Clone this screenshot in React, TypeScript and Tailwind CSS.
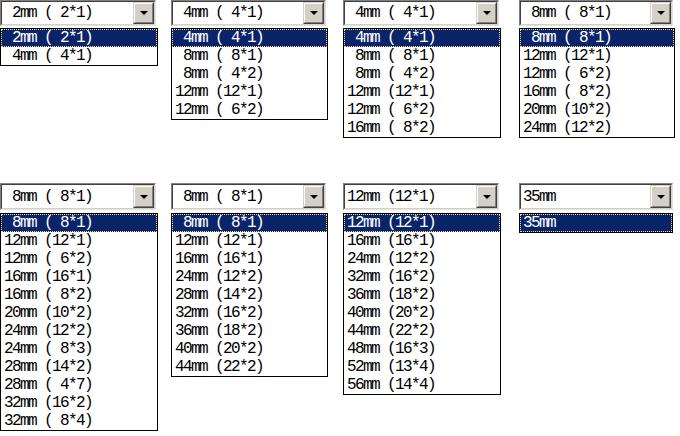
import React from 'react';

type Combo = {
  col: string;
  w: string;
  lw: string;
  value: string;
  items: string[];
};

const topRow: Combo[] = [
  {
    col: 'w-[171px]',
    w: 'w-[156px]',
    lw: 'w-[158px]',
    value: ' 2mm ( 2*1)',
    items: [' 2mm ( 2*1)', ' 4mm ( 4*1)'],
  },
  {
    col: 'w-[172px]',
    w: 'w-[155px]',
    lw: 'w-[157px]',
    value: ' 4mm ( 4*1)',
    items: [' 4mm ( 4*1)', ' 8mm ( 8*1)', ' 8mm ( 4*2)', '12mm (12*1)', '12mm ( 6*2)'],
  },
  {
    col: 'w-[176px]',
    w: 'w-[156px]',
    lw: 'w-[158px]',
    value: ' 4mm ( 4*1)',
    items: [' 4mm ( 4*1)', ' 8mm ( 8*1)', ' 8mm ( 4*2)', '12mm (12*1)', '12mm ( 6*2)', '16mm ( 8*2)'],
  },
  {
    col: 'w-[161px]',
    w: 'w-[154px]',
    lw: 'w-[156px]',
    value: ' 8mm ( 8*1)',
    items: [' 8mm ( 8*1)', '12mm (12*1)', '12mm ( 6*2)', '16mm ( 8*2)', '20mm (10*2)', '24mm (12*2)'],
  },
];

const bottomRow: Combo[] = [
  {
    col: 'w-[171px]',
    w: 'w-[156px]',
    lw: 'w-[158px]',
    value: ' 8mm ( 8*1)',
    items: [
      ' 8mm ( 8*1)', '12mm (12*1)', '12mm ( 6*2)', '16mm (16*1)', '16mm ( 8*2)', '20mm (10*2)',
      '24mm (12*2)', '24mm ( 8*3)', '28mm (14*2)', '28mm ( 4*7)', '32mm (16*2)', '32mm ( 8*4)',
    ],
  },
  {
    col: 'w-[172px]',
    w: 'w-[155px]',
    lw: 'w-[157px]',
    value: ' 8mm ( 8*1)',
    items: [
      ' 8mm ( 8*1)', '12mm (12*1)', '16mm (16*1)', '24mm (12*2)', '28mm (14*2)', '32mm (16*2)',
      '36mm (18*2)', '40mm (20*2)', '44mm (22*2)',
    ],
  },
  {
    col: 'w-[176px]',
    w: 'w-[156px]',
    lw: 'w-[158px]',
    value: '12mm (12*1)',
    items: [
      '12mm (12*1)', '16mm (16*1)', '24mm (12*2)', '32mm (16*2)', '36mm (18*2)', '40mm (20*2)',
      '44mm (22*2)', '48mm (16*3)', '52mm (13*4)', '56mm (14*4)',
    ],
  },
  {
    col: 'w-[161px]',
    w: 'w-[154px]',
    lw: 'w-[154px]',
    value: '35mm',
    items: ['35mm'],
  },
];

const font = "font-['Liberation_Mono',monospace] text-[16px] tracking-[-1.6px] whitespace-pre";

const ComboBox = ({ c, tall }: { c: Combo; tall?: boolean }) => (
  <div className={c.col}>
    {/* closed box, sunken border */}
    <div
      className={`${c.w} ${tall ? 'h-[27px]' : 'h-[26px]'} border border-t-[#808080] border-l-[#808080] border-r-[#e4e2dc] border-b-[#e4e2dc]`}
    >
      <div className="h-full flex items-center bg-white border border-t-[#404040] border-l-[#404040] border-r-[#d4d0c8] border-b-[#d4d0c8]">
        <span className={`${font} pl-[2px] leading-[18px] text-black`}>{c.value}</span>
        <div className="ml-auto h-full w-[21px] bg-[#d4d0c8] border border-t-[#d4d0c8] border-l-[#d4d0c8] border-r-[#404040] border-b-[#404040]">
          <div className="h-full flex items-center justify-center border border-t-white border-l-white border-r-[#808080] border-b-[#808080]">
            <svg width="8" height="4" viewBox="0 0 8 4">
              <path d="M0 0h8L4 4z" fill="#000" />
            </svg>
          </div>
        </div>
      </div>
    </div>

    {/* open list */}
    <div className={`${c.lw} ${tall ? 'mt-[3px]' : 'mt-[2px]'} border border-black bg-white`}>
      {c.items.map((item, i) =>
        i === 0 ? (
          <div
            key={i}
            className={`${font} h-[18px] leading-[16px] pl-[2px] bg-[#0a246a] text-white border border-dotted border-[#f5db95]`}
          >
            {item}
          </div>
        ) : (
          <div key={i} className={`${font} h-[18px] leading-[18px] pl-[3px] text-black`}>
            {item}
          </div>
        )
      )}
    </div>
  </div>
);

export default function App() {
  return (
    <div className="w-[680px] h-[436px] bg-white overflow-hidden">
      <div className="flex items-start h-[183px]">
        {topRow.map((c, i) => (
          <ComboBox key={i} c={c} />
        ))}
      </div>
      <div className="flex items-start">
        {bottomRow.map((c, i) => (
          <ComboBox key={i} c={c} tall />
        ))}
      </div>
    </div>
  );
}
